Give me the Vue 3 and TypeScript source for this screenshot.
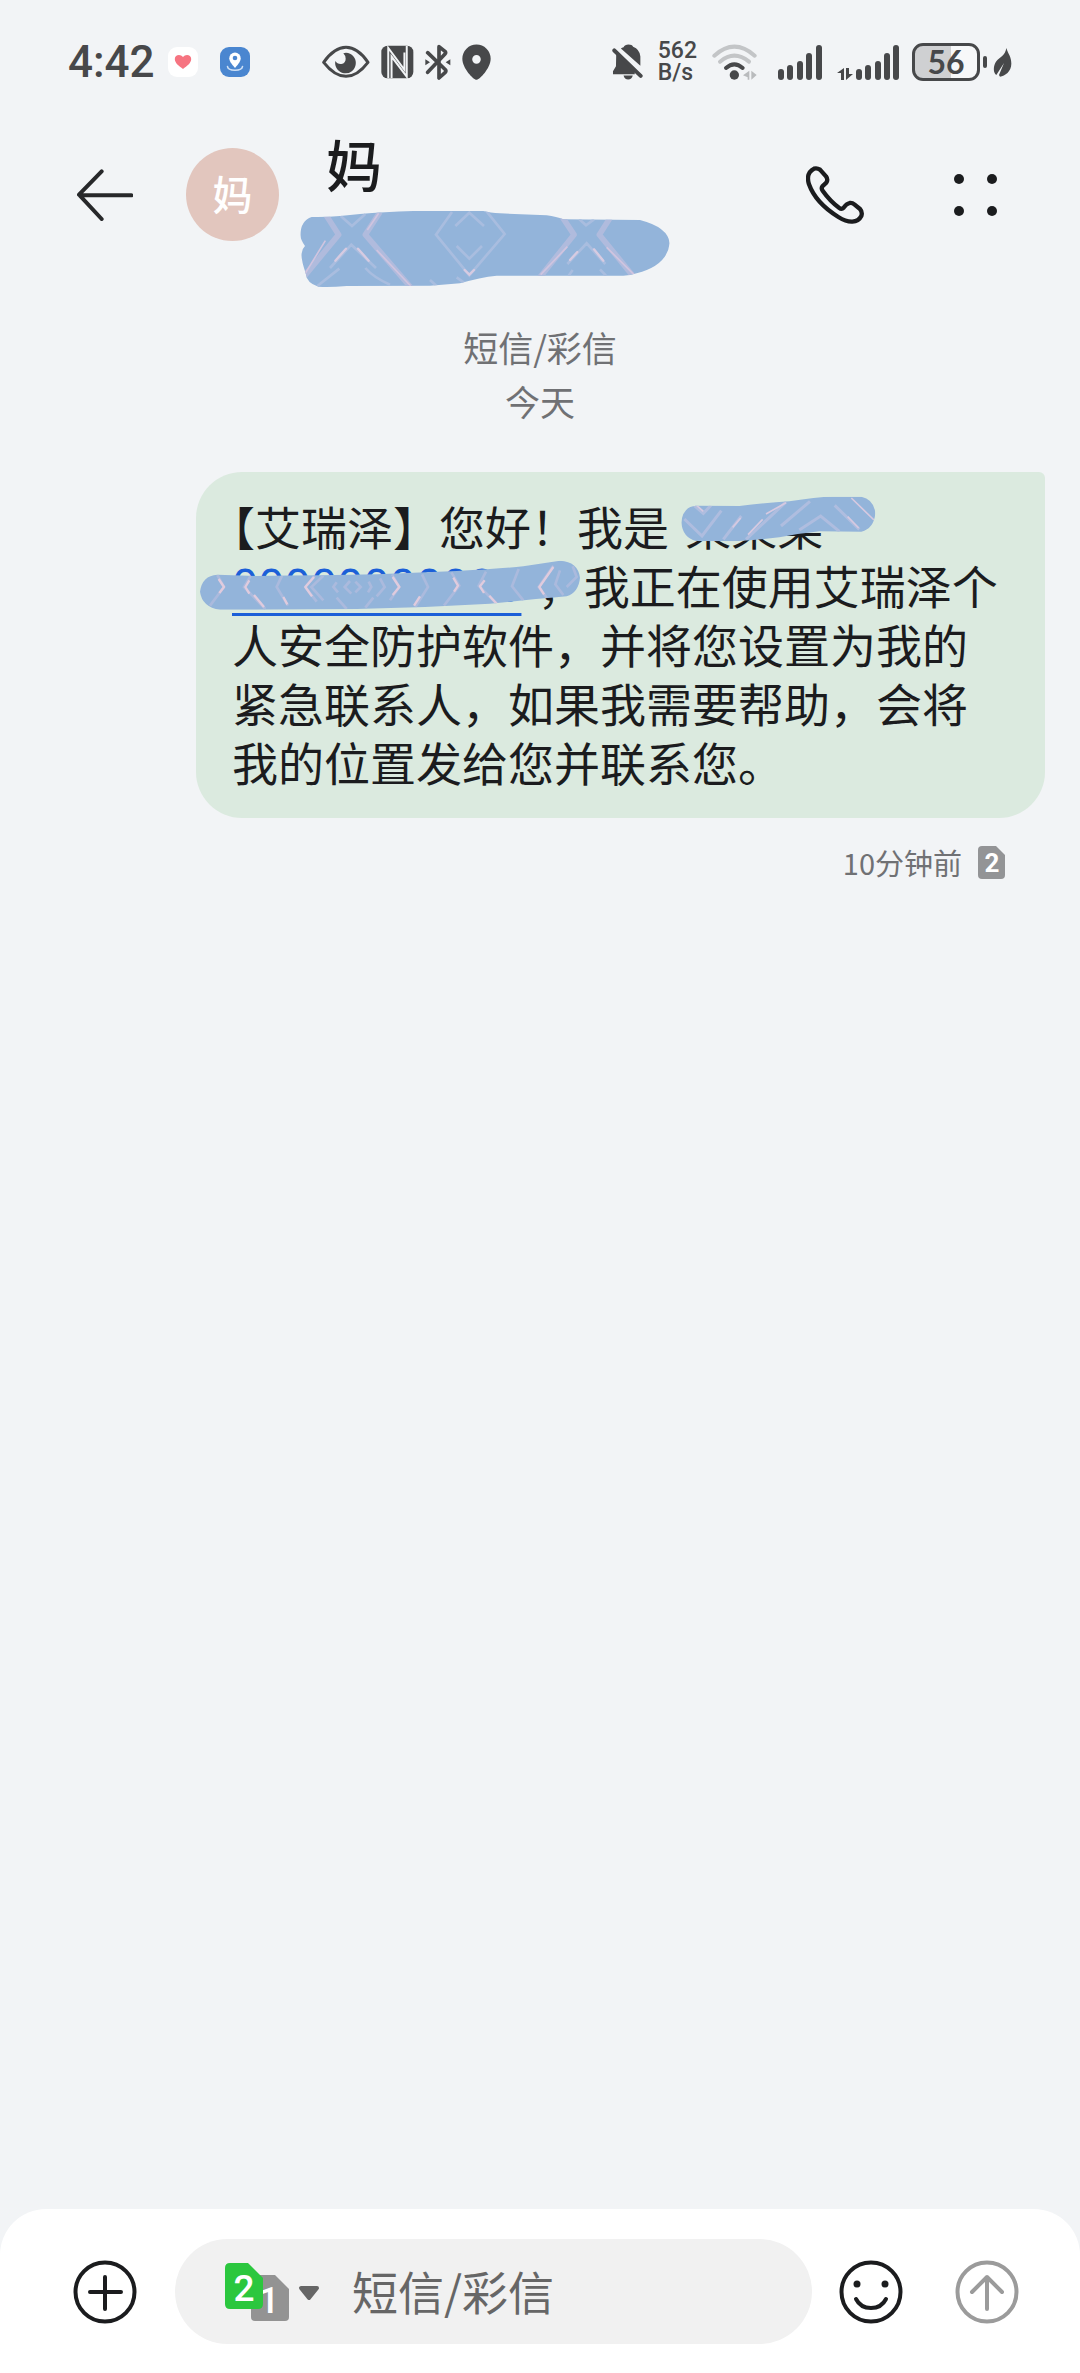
<script setup lang="ts">
import { ref } from 'vue'

interface Bar {
  x: number
  h: number
}

const draft = ref<string>('')
const contactInitial = '妈'
const contactName = '妈'

const mainBars: Bar[] = [
  { x: 0, h: 11 },
  { x: 9, h: 15 },
  { x: 19, h: 19 },
  { x: 28, h: 27 },
  { x: 38, h: 35 },
]
const dataBars: Bar[] = [
  { x: 19, h: 11 },
  { x: 28, h: 15 },
  { x: 38, h: 19 },
  { x: 47, h: 27 },
  { x: 56, h: 35 },
]
</script>

<template>
  <div class="app" lang="zh-CN">
    <div class="status">
      <div class="group left">
        <span class="clock">4:42</span>
        <svg class="app-heart" width="30" height="30" viewBox="0 0 30 30" aria-hidden="true">
          <rect width="30" height="30" rx="9" fill="#fff" />
          <path d="M15 22C11 19 6.800 16 6.800 12C6.800 7.500 12.500 6.500 15 10C17.500 6.500 23.200 7.500 23.200 12C23.200 16 19 19 15 22Z" fill="#f67481" />
        </svg>
        <svg width="30" height="30" viewBox="0 0 30 30" aria-hidden="true">
          <rect width="30" height="30" rx="9" fill="#4a86d0" />
          <path d="M15 21C11 16.500 9.300 14 9.300 11.300a5.700 5.700 0 0 1 11.400 0C20.700 14 19 16.500 15 21Z" fill="#fff" />
          <circle cx="15" cy="11" r="2.300" fill="#4a86d0" />
          <path d="M7.500 19.500C8 24.500 22 24.500 22.500 19.500" fill="none" stroke="#cfe0f5" stroke-width="1.600" stroke-linecap="round" />
        </svg>
      </div>

      <div class="group middle">
        <svg width="48" height="34" viewBox="66 46 144 98" aria-hidden="true">
          <path d="M71 96Q103 51 138 51T204 96Q172 138 138 138T71 96Z" fill="none" stroke="#47484a" stroke-width="9" stroke-linejoin="round" />
          <path d="M138 67A31 31 0 1 1 106 92Q112 102 124 101Q137 98 137 85Q137 76 130 69Z" fill="#47484a" />
        </svg>
        <svg width="33" height="34" viewBox="246 44 100 101" aria-hidden="true">
          <rect x="247" y="45" width="97" height="99" rx="19" fill="#47484a" />
          <path d="M268 143V52L317 118V66" fill="none" stroke="#f2f4f6" stroke-width="6" />
          <path d="M278 143V78L324 139V46" fill="none" stroke="#f2f4f6" stroke-width="6" />
        </svg>
        <svg width="26" height="36" viewBox="380 40 78 108" aria-hidden="true">
          <path d="M388 66L442 118Q444 122 440 126L422 142V48L440 62Q444 66 440 70L388 125" fill="none" stroke="#47484a" stroke-width="11" stroke-linejoin="round" stroke-linecap="round" />
          <path d="M381 86L395 95L381 104ZM456 86L442 95L456 104Z" fill="#47484a" />
        </svg>
        <svg width="29" height="36" viewBox="489 40 88 108" aria-hidden="true">
          <path d="M533 148C524 148 490 113 490 84a43 43 0 0 1 86 0C576 113 542 148 533 148ZM533 73a13 13 0 1 0 0 26a13 13 0 0 0 0-26Z" fill="#47484a" fill-rule="evenodd" />
        </svg>
      </div>

      <div class="group right">
        <svg width="31" height="36" viewBox="71 41 94 108" aria-hidden="true">
          <path d="M84 62L146 122H82Q74 130 74 123L83 108ZM106 50Q110 42 121 42T135 49Q155 57 157 78V106L98 54Q101 51 106 50Z" fill="#47484a" />
          <path d="M78 60L158 137" stroke="#47484a" stroke-width="12" stroke-linecap="round" />
          <path d="M74 122H140V132H74ZM106 136H134Q131 148 120 148T106 136Z" fill="#47484a" />
        </svg>
        <span class="speed">562<br />B/s</span>
        <svg width="45" height="36" viewBox="368 41 135 108" aria-hidden="true">
          <g fill="none" stroke-width="12" stroke-linecap="round">
            <path d="M375 76Q435 22 496 76" stroke="#c3c5c7" />
            <path d="M392 94Q435 58 479 94" stroke="#c3c5c7" />
            <path d="M410 113Q435 91 460 113" stroke="#47484a" />
          </g>
          <circle cx="435" cy="134" r="14" fill="#47484a" />
          <path d="M480 121V148H475V141L461 135ZM486 121L502 134L486 148Z" fill="#b9bbbd" />
        </svg>
        <svg class="bars" width="44" height="36" viewBox="0 0 44 36" aria-hidden="true">
          <rect v-for="b in mainBars" :key="b.x" :x="b.x" :y="36 - b.h" width="6" :height="b.h" rx="3" fill="#47484a" />
        </svg>
        <svg width="62" height="36" viewBox="0 0 62 36" aria-hidden="true">
          <path d="M7 24V36H4V29H0ZM9 24H12V30H16L9 36Z" fill="#47484a" />
          <rect v-for="b in dataBars" :key="b.x" :x="b.x" :y="36 - b.h" width="6" :height="b.h" rx="3" fill="#47484a" />
        </svg>
        <span class="power">
          <span class="battery">56</span>
          <span class="nub"></span>
          <svg width="19" height="31" viewBox="580 49 57 91" aria-hidden="true">
            <path d="M620 51C626 70 635 77 635 98C635 122 616 134 601 137L598 132L613 96L590 132C580 126 580 105 590 91C600 78 617 74 620 51Z" fill="#47484a" />
          </svg>
        </span>
      </div>
    </div>

    <header class="header">
      <button class="icon-btn" type="button" aria-label="返回">
        <svg width="56" height="52" viewBox="80 149 168 156" aria-hidden="true">
          <path d="M154 156L86 226L154 299M88 228H243" fill="none" stroke="#27282a" stroke-width="12" stroke-linecap="round" stroke-linejoin="round" />
        </svg>
      </button>
      <div class="avatar">{{ contactInitial }}</div>
      <div class="contact">
        <h1 class="name">{{ contactName }}</h1>
        <svg class="brush" width="370" height="77" viewBox="60 60 1110 231" aria-hidden="true">
          <defs>
            <clipPath id="brush-head">
              <path d="M61 135Q62 92 95 81Q140 82 180 78L240 72Q310 66 400 63H610Q630 68 660 70L800 76Q830 80 850 88L1080 90Q1165 112 1169 160Q1162 226 1070 250Q1050 257 1030 257H650Q600 262 540 280L450 287L200 288Q150 292 115 290Q80 280 77 250Q62 205 65 190Q67 175 75 168Q62 150 61 135Z" />
            </clipPath>
          </defs>
          <g clip-path="url(#brush-head)" fill="none">
            <rect x="50" y="50" width="1130" height="250" fill="#93b4da" />
            <g stroke="#b0bbdd" stroke-width="17" stroke-linejoin="round">
              <path d="M136 72L176 134L70 262M300 66L256 134L394 294" />
              <path d="M846 80L882 134L778 264M990 84L958 134L1062 262" />
            </g>
            <g stroke="#d0c4df" stroke-width="5">
              <path d="M136 152L72 256M290 180L392 288M862 170L782 254M980 172L1062 254M296 70L262 120" />
            </g>
            <g stroke="#a9bddf" stroke-width="8">
              <path d="M182 78L216 108L256 72M898 88L918 106L942 88" />
              <path d="M516 66L468 134L568 256L674 132L618 62M526 108L568 68L612 108M530 168L568 206L606 168" />
              <path d="M150 234L214 164L288 234M862 222L920 160L976 222M112 288L178 236M256 234Q280 262 330 284M866 257L878 240M960 238L978 257M450 270L470 288M530 262L560 284" />
            </g>
            <path d="M166 212L198 176M234 176L266 212M870 210L892 186M942 178L970 212M554 240L568 254L582 240" stroke="#d7cbe1" stroke-width="7" stroke-linecap="round" />
          </g>
        </svg>
      </div>
      <div class="actions">
        <button class="icon-btn" type="button" aria-label="拨打电话">
          <svg width="58" height="58" viewBox="77 79 174 174" aria-hidden="true">
            <path d="M101 87Q110 84 119 90L137 110Q144 120 138 129L126 140Q122 146 127 153Q149 184 176 204Q184 210 190 204Q198 192 208 190Q216 189 222 194L239 208Q247 217 243 229Q235 245 216 246Q198 247 174 232Q106 190 86 134Q79 112 88 98Q94 90 101 87Z" fill="none" stroke="#1b1c1e" stroke-width="13" stroke-linejoin="round" />
          </svg>
        </button>
        <button class="icon-btn" type="button" aria-label="更多">
          <svg width="44" height="44" viewBox="0 0 44 44" fill="#1b1c1e" aria-hidden="true">
            <circle cx="6" cy="6" r="5" />
            <circle cx="39" cy="6" r="5" />
            <circle cx="6" cy="38" r="5" />
            <circle cx="39" cy="38" r="5" />
          </svg>
        </button>
      </div>
    </header>

    <main class="thread">
      <p class="divider">短信/彩信<br />今天</p>
      <div class="bubble"><span class="open">【</span>艾瑞泽】您好！我是 <span class="masked person">某某某<svg class="mark mark-name" width="195" height="46" viewBox="245 106 585 138" aria-hidden="true">
        <defs>
          <clipPath id="brush-name">
            <path d="M246 186Q250 138 290 135L420 136Q500 126 570 122Q650 108 700 108H786Q824 116 828 158Q824 204 786 213L660 212Q590 220 540 230Q440 242 380 242L290 241Q250 230 246 186Z" />
          </clipPath>
        </defs>
        <g clip-path="url(#brush-name)" fill="none">
          <rect x="240" y="100" width="600" height="150" fill="#93b4da" />
          <path d="M255 175L308 226L366 150M284 134L312 158L335 134M372 236L426 166M440 236L560 124M545 196L632 122M600 208L664 166L720 212M706 134L780 206" stroke="#afbddf" stroke-width="9" />
          <path d="M292 134L312 152M446 222L490 176M500 160L560 126M756 112L824 178M400 200L424 172M745 168L778 202" stroke="#d6c9e0" stroke-width="5" />
        </g>
      </svg></span> <a class="masked phone" href="#">00000000000<svg class="mark mark-phone" width="380" height="50" viewBox="30 299 1140 150" aria-hidden="true">
        <defs>
          <clipPath id="brush-phone">
            <path d="M30 394Q36 346 82 343L200 347Q400 345 560 342L800 332Q940 324 1000 318L1110 301Q1164 304 1170 352Q1166 396 1130 408Q1000 420 900 430Q700 442 500 446L200 448H90Q36 440 30 394Z" />
          </clipPath>
        </defs>
        <g clip-path="url(#brush-phone)" fill="none">
          <rect x="20" y="290" width="1160" height="170" fill="#93b4da" />
          <path d="M82 344L102 380L60 436M182 346L162 380L226 446M276 346L260 380L294 436M374 346L346 380L380 424M400 346L364 380L400 420M440 366L430 380L444 396M480 362L464 380L484 400M496 364L512 380L496 396M536 364L544 380L534 396M570 354L584 380L560 408M606 342L628 380L600 420M696 342L714 380L676 440M784 336L808 376L762 436M888 334L866 376L930 440M986 326L966 378L1000 420M1090 316L1046 380L1070 412M1110 330L1096 372L1120 404M1148 318L1160 350L1130 380M440 412L470 446M550 412L526 442" stroke="#abbadd" stroke-width="8" />
          <path d="M86 356L102 380L88 398M178 360L166 380L178 400M192 404L222 440M280 410L292 432M372 350L346 380L366 408M608 350L628 380L608 404M690 408L672 436M790 352L804 376L792 394M884 360L870 378L882 398M898 406L920 430M1090 320L1048 380L1062 402" stroke="#e0cbdd" stroke-width="7" stroke-linejoin="round" />
        </g>
      </svg></a> ，我正在使用艾瑞泽个人安全防护软件，并将您设置为我的紧急联系人，如果我需要帮助，会将我的位置发给您并联系您。</div>
      <div class="meta">
        <span>10分钟前</span>
        <svg width="27" height="33" viewBox="0 0 27 33" role="img" aria-label="卡2">
          <path d="M4 0H18L27 9V29Q27 33 23 33H4Q0 33 0 29V4Q0 0 4 0Z" fill="#939496" />
          <text x="14" y="26" text-anchor="middle" class="sim-small">2</text>
        </svg>
      </div>
    </main>

    <footer class="composer">
      <button class="icon-btn" type="button" aria-label="添加">
        <svg width="64" height="64" viewBox="0 0 64 64" fill="none" stroke="#1b1c1e" stroke-width="4" stroke-linecap="round" aria-hidden="true">
          <circle cx="32" cy="32" r="29.500" />
          <path d="M32 17V49M17 32H48" />
        </svg>
      </button>
      <div class="field">
        <button class="sim" type="button" aria-label="切换发送卡">
          <svg width="95" height="58" viewBox="0 0 95 58" aria-hidden="true">
            <path d="M30 12H50L64 26V54Q64 58 60 58H30Q26 58 26 54V16Q26 12 30 12Z" fill="#939393" />
            <text x="44" y="50" text-anchor="middle" class="sim-num">1</text>
            <path d="M5 0H23L38 15V41Q38 46 33 46H5Q0 46 0 41V5Q0 0 5 0Z" fill="#2bc73e" />
            <text x="19" y="38" text-anchor="middle" class="sim-num">2</text>
            <path d="M76 25H92L84 35Z" fill="#666" stroke="#666" stroke-width="4" stroke-linejoin="round" />
          </svg>
        </button>
        <input v-model="draft" class="input" type="text" placeholder="短信/彩信" aria-label="短信/彩信" />
      </div>
      <button class="icon-btn emoji" type="button" aria-label="表情">
        <svg width="64" height="64" viewBox="0 0 64 64" fill="none" stroke="#1b1c1e" stroke-width="4" stroke-linecap="round" aria-hidden="true">
          <circle cx="32" cy="32" r="29.500" />
          <path d="M17 39C23 51 41 51 47 39" />
          <circle cx="18" cy="24" r="3.500" fill="#1b1c1e" stroke="none" />
          <circle cx="46" cy="24" r="3.500" fill="#1b1c1e" stroke="none" />
        </svg>
      </button>
      <button class="icon-btn send" type="button" aria-label="发送">
        <svg width="64" height="64" viewBox="0 0 64 64" fill="none" stroke="#9b9b9b" stroke-width="4" stroke-linecap="round" stroke-linejoin="round" aria-hidden="true">
          <circle cx="32" cy="32" r="29.500" />
          <path d="M32 17V49M17 32L32 17L47 32" />
        </svg>
      </button>
    </footer>
  </div>
</template>

<style>
body {
  margin: 0;
  background: #f2f4f6;
}
</style>

<style scoped>
.app {
  display: flex;
  flex-direction: column;
  min-height: 100vh;
  background: #f2f4f6;
  color: #1b1c1e;
  font-family: "Noto Sans CJK SC", "Noto Sans", sans-serif;
}

svg {
  display: block;
  flex: none;
}

button {
  padding: 0;
  border: 0;
  background: none;
  cursor: pointer;
}

.status {
  display: flex;
  align-items: center;
  height: 124px;
  padding: 0 68px;
  color: #47484a;
}

.group {
  display: flex;
  align-items: center;
}

.left {
  gap: 22px;
}

.clock {
  font: 500 44px/50px Roboto, sans-serif;
}

.app-heart {
  margin-left: -9px;
}

.middle {
  gap: 11px;
  margin-left: 72px;
}

.right {
  gap: 15px;
  margin-left: auto;
}

.speed {
  font: 500 23px/22px Roboto, sans-serif;
}

.bars {
  margin-left: 6px;
}

.power {
  display: flex;
  align-items: center;
  margin-left: -2px;
}

.battery {
  box-sizing: border-box;
  width: 68px;
  height: 38px;
  border: 3px solid #47484a;
  border-radius: 11px;
  background: linear-gradient(90deg, #cfd0d2 58%, #f7f8f9 58%);
  font: 700 32px/32px Lato, sans-serif;
  text-align: center;
}

.nub {
  width: 4px;
  height: 12px;
  margin: 0 6px 0 3px;
  border-radius: 2px;
  background: #47484a;
}

.header {
  display: flex;
  align-items: center;
  padding: 0 68px;
}

.header > .icon-btn,
.header > .avatar,
.header > .actions {
  margin-bottom: 22px;
}

.icon-btn {
  display: flex;
  flex: none;
  align-items: center;
  justify-content: center;
  width: 74px;
  height: 74px;
}

.avatar {
  flex: none;
  width: 93px;
  height: 93px;
  margin-left: 44px;
  border-radius: 50%;
  background: #e2c6be;
  color: #fff;
  font-size: 40px;
  font-weight: 500;
  line-height: 90px;
  text-align: center;
}

.contact {
  margin-left: 21px;
  padding-top: 9px;
}

.name {
  margin: 0 0 17px;
  padding-left: 26px;
  font-size: 56px;
  font-weight: 500;
  line-height: 60px;
}

.actions {
  display: flex;
  gap: 66px;
  margin-left: auto;
}

.thread {
  flex: 1;
  padding: 33px 35px 0 196px;
}

.divider {
  margin: 0 0 44px -161px;
  color: #707174;
  font-size: 35px;
  line-height: 54px;
  text-align: center;
}

.bubble {
  padding: 24px 40px 27px 36px;
  border-radius: 46px 6px 46px 46px;
  background: #dbeadf;
  font-family: "Noto Sans CJK SC", sans-serif;
  font-size: 46px;
  line-height: 59px;
}

.open {
  font-feature-settings: "halt";
}

.masked {
  display: inline-block;
  position: relative;
  height: 59px;
  vertical-align: top;
  white-space: nowrap;
}

.person {
  margin-left: 6px;
}

.phone {
  padding-right: 6px;
  color: #1b5fd8;
  font-family: "Noto Sans", sans-serif;
  text-decoration: underline;
  text-decoration-thickness: 3px;
  text-underline-offset: 11px;
}

.mark {
  position: absolute;
}

.mark-name {
  top: 0;
  left: -4px;
}

.mark-phone {
  top: 5px;
  left: -32px;
}

.meta {
  display: flex;
  align-items: center;
  justify-content: flex-end;
  gap: 16px;
  margin-top: 24px;
  padding-right: 40px;
  color: #707174;
  font-size: 29px;
  line-height: 40px;
}

.sim-small {
  fill: #fff;
  font: 700 26px Roboto, sans-serif;
}

.sim-num {
  fill: #fff;
  font: 500 37px Roboto, sans-serif;
}

.composer {
  display: flex;
  align-items: center;
  padding: 30px 56px 29px 68px;
  border-radius: 46px 46px 0 0;
  background: #fff;
}

.field {
  display: flex;
  flex: 1;
  align-items: center;
  gap: 32px;
  min-width: 0;
  height: 105px;
  margin: 0 22px 0 33px;
  padding: 0 50px;
  border-radius: 53px;
  background: #f1f1f1;
}

.input {
  flex: 1;
  min-width: 0;
  height: 80px;
  padding: 0 0 4px;
  border: 0;
  outline: 0;
  background: none;
  color: #1b1c1e;
  font: 400 46px/76px "Noto Sans CJK SC", sans-serif;
}

.input::placeholder {
  color: #666;
  opacity: 1;
}

.send {
  margin-left: 42px;
}
</style>
